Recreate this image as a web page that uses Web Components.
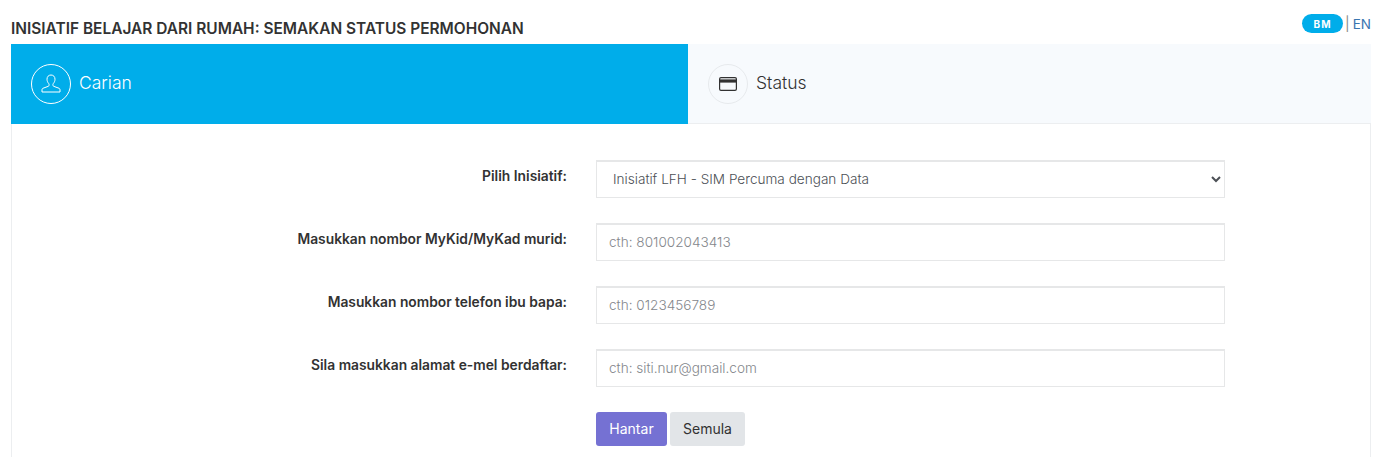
<!DOCTYPE html>
<html lang="ms">
<head>
<meta charset="utf-8">
<title>Semakan Status Permohonan</title>
<style>
  html, body { margin: 0; background: #fff; }
  body { font-family: Inter, "Liberation Sans", sans-serif; color: #323232; overflow: hidden; height: 457px; }
</style>
</head>
<body>
<app-page>
  <page-header title="INISIATIF BELAJAR DARI RUMAH: SEMAKAN STATUS PERMOHONAN"></page-header>
  <step-tabs></step-tabs>
  <form-panel>
    <form-row label="Pilih Inisiatif:">
      <select-box value="Inisiatif LFH - SIM Percuma dengan Data"></select-box>
    </form-row>
    <form-row label="Masukkan nombor MyKid/MyKad murid:">
      <text-box placeholder="cth: 801002043413"></text-box>
    </form-row>
    <form-row label="Masukkan nombor telefon ibu bapa:">
      <text-box placeholder="cth: 0123456789"></text-box>
    </form-row>
    <form-row label="Sila masukkan alamat e-mel berdaftar:">
      <text-box placeholder="cth: siti.nur@gmail.com"></text-box>
    </form-row>
    <form-row>
      <form-actions></form-actions>
    </form-row>
  </form-panel>
</app-page>

<script>
class AppPage extends HTMLElement {
  constructor() {
    super();
    this.attachShadow({ mode: 'open' });
    this.shadowRoot.innerHTML = `
      <style>
        :host { display: block; padding: 0 12px 0 11px; }
      </style>
      <slot></slot>`;
  }
}

class PageHeader extends HTMLElement {
  constructor() {
    super();
    this.attachShadow({ mode: 'open' });
    this.shadowRoot.innerHTML = `
      <style>
        :host { display: flex; justify-content: space-between; height: 44px; }
        h1 { margin: 0; padding-top: 20px; font-size: 15.45px; line-height: 18px; font-weight: 600; color: #323232; white-space: nowrap; }
        .lang { display: flex; align-items: center; height: 19px; margin-top: 14px; font-size: 13.5px; color: #3a76b0; }
        .pill { display: flex; align-items: center; justify-content: center; width: 41px; height: 19px; border-radius: 10px; background: #00adea; color: #fff; font-size: 10px; font-weight: 700; letter-spacing: 1px; }
        .sep { margin: 0 3px 0 2px; color: #8a8a8a; font-size: 14px; }
      </style>
      <h1>${this.getAttribute('title')}</h1>
      <div class="lang"><span class="pill">BM</span><span class="sep">|</span><span>EN</span></div>`;
  }
}

class StepTabs extends HTMLElement {
  constructor() {
    super();
    this.attachShadow({ mode: 'open' });
    this.shadowRoot.innerHTML = `
      <style>
        :host { display: grid; grid-template-columns: 677px 1fr; height: 80px; }
        .tab { display: flex; align-items: center; gap: 8px; padding-left: 20px; font-size: 17.5px; font-weight: 300; }
        .tab > span:last-child { padding-bottom: 2px; }
        .on { background: #00adea; color: #fff; }
        .on > span:last-child { padding-bottom: 3px; }
        .off { background: #f7fafd; color: #323232; border-bottom: 1px solid #eceef0; }
        .dot { width: 40px; height: 40px; border-radius: 50%; display: flex; align-items: center; justify-content: center; box-sizing: border-box; }
        .on .dot { border: 1px solid #fff; }
        .off .dot { border: 1px solid #e7eaed; }
      </style>
      <div class="tab on">
        <span class="dot">
          <svg width="20" height="20" viewBox="0 0 20 20" fill="none" stroke="#fff" stroke-width="1" stroke-linejoin="round">
            <path d="M10 1c-2.400 0-4 1.700-4 4.200 0 1.700.7 3.300 1.700 4.300.3.3.4.7.4 1.100v.6c0 .5-.3.9-.8 1.100L1.900 14.300c-.6.3-.9.8-.9 1.400V18h18v-2.300c0-.6-.3-1.100-.9-1.400l-5.400-2c-.5-.2-.8-.6-.8-1.100v-.6c0-.4.1-.8.4-1.100 1-1 1.700-2.600 1.700-4.300C14 2.700 12.400 1 10 1z"/>
          </svg>
        </span>
        <span>Carian</span>
      </div>
      <div class="tab off">
        <span class="dot">
          <svg width="18" height="14" viewBox="0 0 18 14">
            <rect x=".6" y=".6" width="16.800" height="12.800" rx="1.400" fill="none" stroke="#323232" stroke-width="1.200"/>
            <rect x="0" y="2.400" width="18" height="3.200" fill="#323232"/>
          </svg>
        </span>
        <span>Status</span>
      </div>`;
  }
}

class FormPanel extends HTMLElement {
  constructor() {
    super();
    this.attachShadow({ mode: 'open' });
    this.shadowRoot.innerHTML = `
      <style>
        :host { display: flex; flex-direction: column; gap: 25px; padding: 36px 0 11px; border: 1px solid #eceef0; border-width: 0 1px; }
      </style>
      <slot></slot>`;
  }
}

class FormRow extends HTMLElement {
  constructor() {
    super();
    this.attachShadow({ mode: 'open' });
    this.shadowRoot.innerHTML = `
      <style>
        :host { display: grid; grid-template-columns: 555px 629px; column-gap: 29px; }
        label { text-align: right; font-size: 13.8px; font-weight: 600; line-height: 16px; padding-top: 8px; color: #323232; }
      </style>
      <label>${this.getAttribute('label') || ''}</label>
      <slot></slot>`;
  }
}

const fieldCss = `
  box-sizing: border-box; width: 100%; height: 38px; margin: 0; display: block;
  border: 1px solid #e6e7e8; border-top-width: 2px; border-radius: 0; background: #fff;
  font: 300 13.6px Inter, "Liberation Sans", sans-serif; outline: none;`;

class SelectBox extends HTMLElement {
  constructor() {
    super();
    this.attachShadow({ mode: 'open' });
    this.shadowRoot.innerHTML = `
      <style>
        :host { display: block; }
        select { ${fieldCss} padding: 0 8px 2px 12px; color: #4c5056; }
      </style>
      <select><option>${this.getAttribute('value')}</option></select>`;
  }
}

class TextBox extends HTMLElement {
  constructor() {
    super();
    this.attachShadow({ mode: 'open' });
    this.shadowRoot.innerHTML = `
      <style>
        :host { display: block; }
        input { ${fieldCss} padding: 0 12px 2px; color: #5c6066; }
        input::placeholder { color: #84878c; opacity: 1; }
      </style>
      <input type="text" placeholder="${this.getAttribute('placeholder')}">`;
  }
}

class FormActions extends HTMLElement {
  constructor() {
    super();
    this.attachShadow({ mode: 'open' });
    this.shadowRoot.innerHTML = `
      <style>
        :host { display: flex; gap: 3px; }
        button { height: 34px; border: 0; border-radius: 3px; font: 400 14px Inter, "Liberation Sans", sans-serif; padding: 0 0 2px; }
        .send { width: 71px; background: #7571d3; color: #fff; }
        .reset { width: 75px; background: #e2e5e8; color: #323232; }
      </style>
      <button class="send" type="button">Hantar</button>
      <button class="reset" type="button">Semula</button>`;
  }
}

customElements.define('app-page', AppPage);
customElements.define('page-header', PageHeader);
customElements.define('step-tabs', StepTabs);
customElements.define('form-panel', FormPanel);
customElements.define('form-row', FormRow);
customElements.define('select-box', SelectBox);
customElements.define('text-box', TextBox);
customElements.define('form-actions', FormActions);
</script>
</body>
</html>
